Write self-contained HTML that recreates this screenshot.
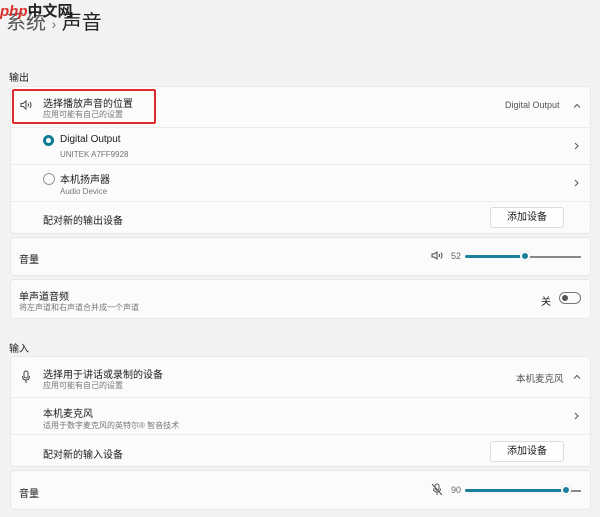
<!DOCTYPE html><html><head><meta charset="utf-8"><style>
body{margin:0;width:600px;height:517px;background:#f3f3f3;font-family:"Liberation Sans","Noto Sans CJK SC",sans-serif;color:#1b1b1b;position:relative;overflow:hidden}
.a{position:absolute;white-space:nowrap}
.card{position:absolute;left:10px;width:581px;background:#fbfbfb;border:1px solid #e8e8e8;border-radius:4px;box-sizing:border-box}
.sep{position:absolute;left:10px;width:581px;height:1px;background:#ececec}
.t{font-size:10px}.s{font-size:8px;color:#777}
.btn{position:absolute;width:74px;height:21px;background:#fefefe;border:1px solid #dcdcdc;border-radius:3px;box-sizing:border-box;font-size:10px;text-align:center;line-height:19px}
</style></head><body>
<div class="a" style="left:6px;top:6px;font-size:20px;color:#555">系统 <span style="font-size:14px;color:#777">›</span> <span style="color:#222">声音</span></div>
<div class="a" style="left:0;top:0;font-size:15px;font-weight:bold;color:#d9302a;font-style:italic">php<span style="color:#222;font-style:normal">中文网</span></div>
<div class="a t" style="left:9px;top:69px">输出</div>

<div class="card" style="top:86px;height:148px"></div>
<div class="sep" style="top:127px"></div><div class="sep" style="top:164px"></div><div class="sep" style="top:201px"></div>
<div class="a" style="left:12px;top:89px;width:144px;height:35px;border:2px solid #e0292c;border-radius:2px;box-sizing:border-box"></div>
<svg class="a" style="left:20px;top:100px" width="13" height="10" viewBox="0 0 13 10"><path d="M1 3.5h2l3-2.5v8l-3-2.5H1z M8 3.5q1 1.5 0 3 M10 2q2 3 0 6" fill="none" stroke="#444" stroke-width="1"/></svg>
<div class="a t" style="left:43px;top:95px">选择播放声音的位置</div>
<div class="a s" style="left:43px;top:109px">应用可能有自己的设置</div>
<div class="a" style="left:505px;top:100px;font-size:9px;color:#555">Digital Output</div>
<svg class="a" style="left:573px;top:103px" width="8" height="5" viewBox="0 0 8 5"><path d="M1 4.5L4 1.5L7 4.5" fill="none" stroke="#555"/></svg>
<div class="a" style="left:43px;top:135px;width:11px;height:11px;border:3px solid #0f7c94;border-radius:50%;box-sizing:border-box;background:#fff"></div>
<div class="a t" style="left:60px;top:134px">Digital Output</div>
<div class="a s" style="left:60px;top:150px">UNITEK A7FF9928</div>
<svg class="a" style="left:574px;top:142px" width="5" height="8" viewBox="0 0 5 8"><path d="M1 1l3 3-3 3" fill="none" stroke="#555"/></svg>
<div class="a" style="left:43px;top:173px;width:12px;height:12px;border:1px solid #999;border-radius:50%;box-sizing:border-box"></div>
<div class="a t" style="left:60px;top:171px">本机扬声器</div>
<div class="a s" style="left:60px;top:187px">Audio Device</div>
<svg class="a" style="left:574px;top:179px" width="5" height="8" viewBox="0 0 5 8"><path d="M1 1l3 3-3 3" fill="none" stroke="#555"/></svg>
<div class="a t" style="left:43px;top:212px">配对新的输出设备</div>
<div class="btn" style="left:490px;top:207px">添加设备</div>

<div class="card" style="top:237px;height:39px"></div>
<div class="a t" style="left:19px;top:251px">音量</div>
<svg class="a" style="left:431px;top:251px" width="12" height="9" viewBox="0 0 12 9"><path d="M1 3h2l3-2v7l-3-2H1z M8 3q1 1.5 0 3 M10 1.5q2 3 0 6" fill="none" stroke="#444" stroke-width="1"/></svg>
<div class="a" style="left:451px;top:251px;font-size:9px;color:#666">52</div>
<div class="a" style="left:465px;top:255px;width:60px;height:3px;background:#1a7f99;border-radius:2px"></div>
<div class="a" style="left:525px;top:255.5px;width:56px;height:2px;background:#888"></div>
<div class="a" style="left:520px;top:251px;width:10px;height:10px;border-radius:50%;background:#fff;box-shadow:0 0 1px #999"></div>
<div class="a" style="left:522px;top:253px;width:6px;height:6px;border-radius:50%;background:#1a7f99"></div>

<div class="card" style="top:279px;height:40px"></div>
<div class="a t" style="left:19px;top:288px">单声道音频</div>
<div class="a s" style="left:19px;top:302px">将左声道和右声道合并成一个声道</div>
<div class="a t" style="left:541px;top:293px">关</div>
<div class="a" style="left:559px;top:292px;width:22px;height:12px;border:1px solid #777;border-radius:7px;box-sizing:border-box"></div>
<div class="a" style="left:562px;top:295px;width:6px;height:6px;border-radius:50%;background:#555"></div>

<div class="a t" style="left:9px;top:340px">输入</div>
<div class="card" style="top:356px;height:111px"></div>
<div class="sep" style="top:397px"></div><div class="sep" style="top:434px"></div>
<svg class="a" style="left:21px;top:370px" width="10" height="14" viewBox="0 0 10 14"><rect x="3" y="1" width="4" height="7" rx="2" fill="none" stroke="#444"/><path d="M1.5 6q0 4 3.5 4t3.5-4 M5 10v3" fill="none" stroke="#444"/></svg>
<div class="a t" style="left:43px;top:366px">选择用于讲话或录制的设备</div>
<div class="a s" style="left:43px;top:380px">应用可能有自己的设置</div>
<div class="a" style="left:516px;top:371px;font-size:9.5px;color:#555">本机麦克风</div>
<svg class="a" style="left:573px;top:374px" width="8" height="5" viewBox="0 0 8 5"><path d="M1 4.5L4 1.5L7 4.5" fill="none" stroke="#555"/></svg>
<div class="a t" style="left:43px;top:405px">本机麦克风</div>
<div class="a s" style="left:43px;top:420px">适用于数字麦克风的英特尔® 智音技术</div>
<svg class="a" style="left:574px;top:412px" width="5" height="8" viewBox="0 0 5 8"><path d="M1 1l3 3-3 3" fill="none" stroke="#555"/></svg>
<div class="a t" style="left:43px;top:446px">配对新的输入设备</div>
<div class="btn" style="left:490px;top:441px">添加设备</div>

<div class="card" style="top:470px;height:40px"></div>
<div class="a t" style="left:19px;top:485px">音量</div>
<svg class="a" style="left:431px;top:483px" width="12" height="13" viewBox="0 0 12 13"><rect x="4" y="1" width="4" height="6" rx="2" fill="none" stroke="#555"/><path d="M2.5 5.5q0 3.5 3.5 3.5t3.5-3.5 M6 9v3 M1 1l10 11" fill="none" stroke="#555"/></svg>
<div class="a" style="left:451px;top:485px;font-size:9px;color:#666">90</div>
<div class="a" style="left:465px;top:489px;width:101px;height:3px;background:#1a7f99;border-radius:2px"></div>
<div class="a" style="left:566px;top:489.5px;width:15px;height:2px;background:#888"></div>
<div class="a" style="left:561px;top:485px;width:10px;height:10px;border-radius:50%;background:#fff;box-shadow:0 0 1px #999"></div>
<div class="a" style="left:563px;top:487px;width:6px;height:6px;border-radius:50%;background:#1a7f99"></div>
</body></html>
